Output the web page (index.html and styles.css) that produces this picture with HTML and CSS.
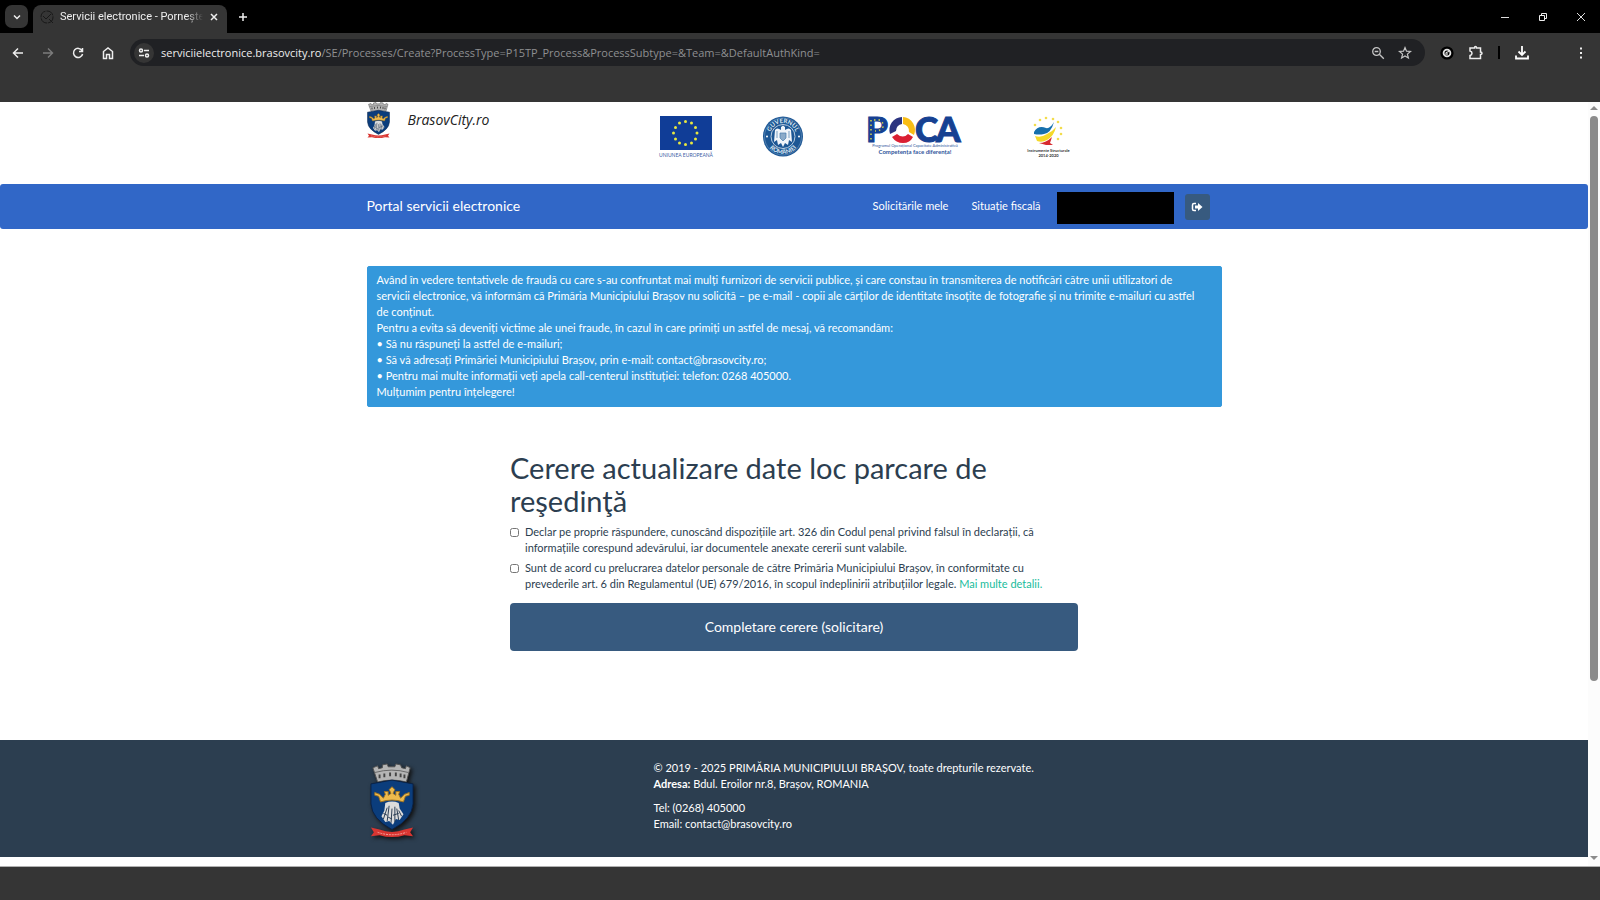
FILE: index.html
```html
<!DOCTYPE html>
<html lang="ro">
<head>
    <meta charset="UTF-8">
    <meta name="viewport" content="width=device-width, initial-scale=1.0">
    <title>Servicii electronice - Pornește demers</title>
    <link rel="stylesheet" href="styles.css">
</head>
<body>
    <!-- Shared coat of arms -->
    <svg class="defs" width="0" height="0" aria-hidden="true">
        <symbol id="crest" viewBox="0 0 46 80" preserveAspectRatio="none">
            <path d="M3 5 L8 3 9 6 13 5 13 2 18 1 19 4 26 4 27 1 32 2 33 5 37 6 38 3 42 5 38 20 Q23 16 8 20 Z" fill="#b5b5b5" stroke="#555" stroke-width="1"/>
            <path d="M5 10 Q23 5 40 10" fill="none" stroke="#666" stroke-width="1"/>
            <path d="M10 12v4M15 11v4M21 10v4M27 10v4M32 11v4M36 12v4" stroke="#444" stroke-width="2"/>
            <path d="M1 22 Q12 20 23 18 Q34 20 45 22 L45 43 Q44 59 23 70 Q2 59 1 43 Z" fill="#0b3d7c" stroke="#0a2347" stroke-width="1"/>
            <path d="M16 42 Q23 39 30 42 L31 48 35 54 31 60 27 59 24 65 20 61 16 62 12 56 15 50 Z" fill="#dcdcdc"/>
            <path d="M18 47 L14 59M20 45 L18 61M23 48 L22 63M26 46 L26 62M28 48 L30 60M30 50 L33 56M14 53l4 2M24 55l6-2M19 57l4 2" stroke="#25384f" stroke-width="1"/>
            <path d="M11 41 L9 35 5 34 5 31 10 33 14 37 16 33 15 30 19 30 19 34 22 32 20 28 23 25 26 28 24 32 27 34 27 30 31 30 30 33 32 37 36 33 41 31 41 34 37 35 35 41 Q23 37 11 41 Z" fill="#eebb4d" stroke="#9b7020" stroke-width="1"/>
            <path d="M1 68 L10 70 Q23 75 36 70 L45 68 42 73 45 77 36 76 Q23 80 10 76 L1 77 4 73 Z" fill="#d93632"/>
            <path d="M8 73 Q23 78 38 73" fill="none" stroke="#f6aaa5" stroke-width="1" stroke-dasharray="2 1"/>
        </symbol>
    </svg>

    <div class="tab-strip">
        <button class="tab-search" aria-label="Search tabs">
            <svg width="10" height="10" viewBox="0 0 10 10"><path d="M2 3.5 5 6.5 8 3.5" class="stroke-light"/></svg>
        </button>
        <div class="tab">
            <svg width="14" height="14" viewBox="0 0 14 14"><circle cx="7" cy="7" r="6" fill="none" stroke="#181818" stroke-dasharray="8 1"/><path d="M3 6 6 9 11 4M9 9l4 4" fill="none" stroke="#181818"/></svg>
            <span class="tab-title">Servicii electronice - Pornește d</span>
            <button class="icon-button" aria-label="Close tab">
                <svg width="10" height="10" viewBox="0 0 10 10"><path d="M2 2 8 8M8 2 2 8" class="stroke-light"/></svg>
            </button>
        </div>
        <button class="icon-button new-tab" aria-label="New tab">
            <svg width="10" height="10" viewBox="0 0 10 10"><path d="M5 1V9M1 5H9" class="stroke-light"/></svg>
        </button>
        <div class="window-controls">
            <button class="icon-button" aria-label="Minimize"><svg width="10" height="10" viewBox="0 0 10 10"><path d="M1 5.5H9" stroke="#ddd"/></svg></button>
            <button class="icon-button" aria-label="Restore"><svg width="10" height="10" viewBox="0 0 10 10"><path d="M1.5 3.5h5v5h-5zM3.5 3V1.5h5v5H7" fill="none" stroke="#eee"/></svg></button>
            <button class="icon-button" aria-label="Close"><svg width="10" height="10" viewBox="0 0 10 10"><path d="M1 1 9 9M9 1 1 9" stroke="#ddd"/></svg></button>
        </div>
    </div>

    <div class="toolbar">
        <div class="toolbar-nav">
            <button class="icon-button" aria-label="Back"><svg width="14" height="14" viewBox="0 0 14 14"><path d="M12 7H2.5M7 2.5 2.5 7 7 11.5" class="stroke-light"/></svg></button>
            <button class="icon-button" aria-label="Forward"><svg width="14" height="14" viewBox="0 0 14 14"><path d="M2 7H11.5M7 2.5 11.5 7 7 11.5" fill="none" stroke="#7c7c7c" stroke-width="1.4"/></svg></button>
            <button class="icon-button" aria-label="Reload"><svg width="14" height="14" viewBox="0 0 14 14"><path d="M11 4.5A4.6 4.6 0 1 0 11.6 8M11.5 2V5.5H8" class="stroke-light"/></svg></button>
            <button class="icon-button" aria-label="Home"><svg width="14" height="14" viewBox="0 0 14 14"><path d="M2.5 12.5V5.5L7 2 11.5 5.5V12.5H8.5V8.5H5.5V12.5Z" class="stroke-light"/></svg></button>
        </div>
        <div class="address-bar">
            <span class="site-info">
                <svg width="12" height="12" viewBox="0 0 12 12"><path d="M6 3.5H11M1 8.5H6" class="stroke-light"/><circle cx="3" cy="3.5" r="1.5" class="stroke-light"/><circle cx="9" cy="8.5" r="1.5" class="stroke-light"/></svg>
            </span>
            <span class="url"><span class="url-host">serviciielectronice.brasovcity.ro</span>/SE/Processes/Create?ProcessType=P15TP_Process&amp;ProcessSubtype=&amp;Team=&amp;DefaultAuthKind=</span>
            <button class="icon-button" aria-label="Zoom"><svg width="14" height="14" viewBox="0 0 14 14"><circle cx="5.5" cy="5.5" r="3.8" fill="none" stroke="#c4c4c4" stroke-width="1.3"/><path d="M8.3 8.3 12.8 12.8M3.7 5.5H7.3" stroke="#c4c4c4" stroke-width="1.3"/></svg></button>
            <button class="icon-button" aria-label="Bookmark"><svg width="14" height="14" viewBox="0 0 14 14"><path d="M7 1.5 8.5 5.2 12.5 5.5 9.4 8.1 10.4 12 7 9.9 3.6 12 4.6 8.1 1.5 5.5 5.5 5.2Z" fill="none" stroke="#c4c4c4" stroke-width="1.2"/></svg></button>
        </div>
        <div class="toolbar-actions">
            <button class="icon-button" aria-label="Extension"><svg width="14" height="14" viewBox="0 0 14 14"><circle cx="7" cy="7" r="6.6" fill="#000"/><circle cx="7" cy="7" r="3.4" fill="none" stroke="#e6e6e6" stroke-width="1.8"/><path d="M6 9V6.5L9 5.5M6.5 8H8" fill="none" stroke="#fff"/></svg></button>
            <button class="icon-button" aria-label="Extensions"><svg width="16" height="16" viewBox="0 0 16 16"><path d="M2 3H6.500Q6.500 1.500 7.500 1.500T8.500 3H12.500V7Q14 7 14 8.200T12.500 9.500V13.500H2V10.500Q4 10 4 8.200T2 6Z" class="stroke-light"/></svg></button>
            <span class="divider"></span>
            <button class="icon-button" aria-label="Downloads"><svg width="16" height="16" viewBox="0 0 16 16"><path d="M8 1V9.5M4.5 6.5 8 10 11.5 6.5M2 10.5V13.5H14V10.5" fill="none" stroke="#fff" stroke-width="1.8"/></svg></button>
            <button class="icon-button menu" aria-label="Menu"><svg width="14" height="14" viewBox="0 0 14 14"><path d="M6 1.500h2v2H6zM6 6h2v2H6zM6 10.500h2v2H6z" fill="#eee"/></svg></button>
        </div>
    </div>
    <div class="bookmarks-bar"></div>

    <div class="viewport">
        <div class="page">
            <header class="container header">
                <a class="city" href="#">
                    <svg width="23" height="37"><use href="#crest" width="23" height="37"/></svg>
                    <span>BrasovCity.ro</span>
                </a>
                <div class="partners">
                    <svg width="52" height="42" viewBox="0 0 52 42" role="img" aria-label="Uniunea Europeană">
                        <rect width="52" height="34" fill="#103d97"/>
                        <g fill="#e9e83f">
                            <circle cx="25.500" cy="5.500" r="1.500"/><circle cx="31.500" cy="7" r="1.500"/><circle cx="35.500" cy="11.500" r="1.500"/><circle cx="37" cy="17" r="1.500"/><circle cx="35.500" cy="23" r="1.500"/><circle cx="31.500" cy="27" r="1.500"/><circle cx="25.500" cy="28.500" r="1.500"/><circle cx="19.500" cy="27" r="1.500"/><circle cx="15.500" cy="23" r="1.500"/><circle cx="13.500" cy="17" r="1.500"/><circle cx="15.500" cy="11.500" r="1.500"/><circle cx="19.500" cy="7" r="1.500"/>
                        </g>
                        <text x="26" y="41" text-anchor="middle" font-size="5" fill="#3f60a5">UNIUNEA EUROPEANĂ</text>
                    </svg>
                    <svg width="40" height="42" viewBox="0 0 40 42" role="img" aria-label="Guvernul României">
                        <path id="arc-top" d="M6.500 20.500A13.500 13.500 0 0 1 33.500 20.500" fill="none"/>
                        <path id="arc-bottom" d="M2.500 20.500A17.500 17.500 0 0 0 37.500 20.500" fill="none"/>
                        <circle cx="20" cy="20.500" r="20" fill="#1d5794"/>
                        <circle cx="20" cy="20.500" r="18.500" fill="none" stroke="#7ea2c8" stroke-width="0.500"/>
                        <circle cx="20" cy="20.500" r="12" fill="none" stroke="#b9cde1" stroke-width="1"/>
                        <g font-size="6" font-weight="bold" fill="#dce7f2" text-anchor="middle">
                            <text><textPath href="#arc-top" startOffset="50%">GUVERNUL</textPath></text>
                            <text><textPath href="#arc-bottom" startOffset="50%">ROMÂNIEI</textPath></text>
                        </g>
                        <path d="M18 11 20 9.500 22 11 22 14Q26 11 28 14L29 26 26 24 25 29 22 27 20 31 18 27 15 29 14 24 11 26 12 14Q14 11 18 14Z" fill="#f0f4f9"/>
                        <path d="M17 17H23V22L20 25 17 22ZM14 15V22M26 15V22" fill="#8cabc9" stroke="#497dad" stroke-width="0.700"/>
                        <circle cx="4" cy="20.500" r="1" fill="#fff"/><circle cx="36" cy="20.500" r="1" fill="#fff"/>
                    </svg>
                    <svg class="poca" width="96" height="40" viewBox="0 0 96 40" role="img" aria-label="POCA">
                        <g font-size="35" font-weight="900" fill="#164192" stroke="#164192"><text x="-2" y="26">P</text><text x="47" y="26">C</text><text x="68" y="26">A</text></g>
                        <path d="M3 4V24M6 4H12Q16 7 15 11Q13 15 7 15" fill="none" stroke="#d5d64b" stroke-width="1.500" stroke-dasharray="1.500 3"/>
                        <path d="M34 1A13 13 0 0 0 22 18L28 15A7 7 0 0 1 34 8Z" fill="#2b3480"/>
                        <path d="M35 1A13 13 0 0 1 46 19L41 16A7 7 0 0 0 35 8Z" fill="#f9bd16"/>
                        <path d="M24 21 29 18Q35 23 40 18L45 21Q42 27 35 27T24 21Z" fill="#da1f32"/>
                        <g text-anchor="middle" fill="#31569c"><text x="47" y="31" font-size="4">Programul Operațional Capacitate Administrativă</text><text x="47" y="38" font-size="6" font-weight="bold">Competența face diferența!</text></g>
                    </svg>
                    <svg width="43" height="42" viewBox="0 0 43 42" role="img" aria-label="Instrumente Structurale">
                        <path d="M7 16Q11 9 19 12 23 13 27 6 24 17 17 18 12 19 7 18Z" fill="#1670ad"/>
                        <path d="M8 20Q14 22 20 18 26 15 29 11 27 20 20 24 15 27 10 25Z" fill="#f4d929"/>
                        <path d="M12 27Q19 27 25 21L23 27 26 29 19 29Z" fill="#d7292e"/>
                        <g fill="#f2dc4d"><circle cx="8" cy="9" r="1.300"/><circle cx="13" cy="4" r="1.300"/><circle cx="19" cy="2" r="1.300"/><circle cx="26" cy="3" r="1.300"/><circle cx="31" cy="6" r="1.300"/><circle cx="34" cy="12" r="1.300"/><circle cx="34" cy="18" r="1.300"/><circle cx="31" cy="23" r="1.300"/></g>
                        <g text-anchor="middle" font-size="4" font-weight="bold" fill="#333"><text x="21.500" y="36">Instrumente Structurale</text><text x="21.500" y="41">2014-2020</text></g>
                    </svg>
                </div>
            </header>

            <nav class="navbar">
                <div class="container navbar-inner">
                    <a class="navbar-brand" href="#">Portal servicii electronice</a>
                    <a class="nav-link" href="#">Solicitările mele</a>
                    <a class="nav-link" href="#">Situație fiscală</a>
                    <span class="user-name"></span>
                    <button class="logout" aria-label="Deconectare">
                        <svg width="12" height="10" viewBox="0 0 12 10"><path d="M5 1.500H3Q1.500 1.500 1.500 3V7Q1.500 8.500 3 8.500H5" fill="none" stroke="#fff" stroke-width="1.500"/><path d="M4 3.500H7V1L11.500 5 7 9V6.500H4Z" fill="#fff"/></svg>
                    </button>
                </div>
            </nav>

            <main class="container">
                <div class="alert">
                    Având în vedere tentativele de fraudă cu care s-au confruntat mai mulți furnizori de servicii publice, și care constau în transmiterea de notificări către unii utilizatori de servicii electronice, vă informăm că Primăria Municipiului Brașov nu solicită – pe e-mail - copii ale cărților de identitate însoțite de fotografie și nu trimite e-mailuri cu astfel de conținut.<br>
                    Pentru a evita să deveniți victime ale unei fraude, în cazul în care primiți un astfel de mesaj, vă recomandăm:<br>
                    • Să nu răspuneți la astfel de e-mailuri;<br>
                    • Să vă adresați Primăriei Municipiului Brașov, prin e-mail: contact@brasovcity.ro;<br>
                    • Pentru mai multe informații veți apela call-centerul instituției: telefon: 0268 405000.<br>
                    Mulțumim pentru înțelegere!
                </div>

                <form class="request-form">
                    <h1>Cerere actualizare date loc parcare de reşedinţă</h1>
                    <div class="checkbox">
                        <input type="checkbox" id="declar">
                        <label for="declar">Declar pe proprie răspundere, cunoscând dispozițiile art. 326 din Codul penal privind falsul în declarații, că informațiile corespund adevărului, iar documentele anexate cererii sunt valabile.</label>
                    </div>
                    <div class="checkbox">
                        <input type="checkbox" id="acord">
                        <label for="acord">Sunt de acord cu prelucrarea datelor personale de către Primăria Municipiului Brașov, în conformitate cu prevederile art. 6 din Regulamentul (UE) 679/2016, în scopul îndeplinirii atribuțiilor legale. <a href="#">Mai multe detalii.</a></label>
                    </div>
                    <button type="button" class="submit">Completare cerere (solicitare)</button>
                </form>
            </main>

            <footer class="footer">
                <div class="container footer-inner">
                    <svg class="footer-crest" width="44" height="76"><use href="#crest" width="44" height="76"/></svg>
                    <div>
                        <p>© 2019 - 2025 PRIMĂRIA MUNICIPIULUI BRAȘOV, toate drepturile rezervate.<br><strong>Adresa:</strong> Bdul. Eroilor nr.8, Brașov, ROMANIA</p>
                        <p>Tel: (0268) 405000<br>Email: contact@brasovcity.ro</p>
                    </div>
                </div>
            </footer>
        </div>
        <div class="scrollbar">
            <svg width="8" height="4" viewBox="0 0 8 4"><path d="M0 4 4 0 8 4Z" fill="#8b8b8b"/></svg>
            <div class="scroll-track"><div class="scroll-thumb"></div></div>
            <svg width="8" height="4" viewBox="0 0 8 4"><path d="M0 0 4 4 8 0Z" fill="#8b8b8b"/></svg>
        </div>
    </div>
    <div class="bottom-bar"></div>
</body>
</html>
```
FILE: styles.css
```css
* {
    box-sizing: border-box;
}
body {
    margin: 0;
    min-height: 100vh;
    display: flex;
    flex-direction: column;
    background-color: #353535;
    font-family: Lato, sans-serif;
    font-size: 11px;
    line-height: 16px;
    color: #2c3e50;
}
button {
    font-family: inherit;
    border: none;
    padding: 0;
    cursor: pointer;
}
svg {
    display: block;
    flex: none;
    overflow: visible;
}
a {
    color: #18bc9c;
    text-decoration: none;
}
.defs {
    position: absolute;
}
.stroke-light {
    fill: none;
    stroke: #eee;
    stroke-width: 1.5;
}
.icon-button {
    display: flex;
    background: none;
}

/* Browser window */
.tab-strip {
    flex: none;
    display: flex;
    align-items: flex-end;
    height: 33px;
    padding-left: 5px;
    background-color: #000;
    font-family: Roboto, sans-serif;
}
.tab-search {
    display: flex;
    align-items: center;
    justify-content: center;
    width: 23px;
    height: 23px;
    margin: 0 5px 5px 0;
    border-radius: 7px;
    background-color: #353535;
}
.tab {
    display: flex;
    align-items: center;
    gap: 6px;
    width: 194px;
    height: 28px;
    padding: 0 8px 4px 7px;
    border-radius: 8px 8px 0 0;
    background-color: #353535;
    color: #eee;
}
.tab-title {
    flex: 1;
    overflow: hidden;
    white-space: nowrap;
    mask-image: linear-gradient(to right, #000 88%, transparent);
}
.new-tab {
    margin: 0 0 11px 11px;
}
.window-controls {
    display: flex;
    gap: 28px;
    margin-left: auto;
    padding: 0 14px 11px 0;
}
.toolbar {
    flex: none;
    display: flex;
    align-items: center;
    height: 39px;
    padding: 0 12px 0 11px;
    background-color: #353535;
}
.toolbar-nav {
    display: flex;
    gap: 16px;
    margin-right: 15px;
}
.address-bar {
    flex: 1;
    display: flex;
    align-items: center;
    gap: 13px;
    height: 27px;
    padding: 0 13px 0 4px;
    border-radius: 14px;
    background-color: #202124;
    font-family: "Open Sans", sans-serif;
    color: #8e8f91;
}
.site-info {
    display: flex;
    align-items: center;
    justify-content: center;
    width: 20px;
    height: 20px;
    margin-right: -6px;
    border-radius: 50%;
    background-color: #353535;
}
.url {
    flex: 1;
    white-space: nowrap;
}
.url-host {
    color: #eee;
}
.toolbar-actions {
    display: flex;
    align-items: center;
    gap: 14px;
    margin-left: 15px;
}
.divider {
    width: 2px;
    height: 13px;
    background-color: #000;
}
.menu {
    margin-left: 30px;
}
.bookmarks-bar {
    height: 30px;
}
.viewport {
    flex: 1;
    display: flex;
    background-color: #fff;
}
.page {
    flex: 1;
    padding-bottom: 9px;
}
.scrollbar {
    width: 12px;
    display: flex;
    flex-direction: column;
    align-items: center;
    gap: 6px;
    padding: 4px 0 6px;
    background-color: #fcfcfc;
}
.scroll-track {
    flex: 1;
}
.scroll-thumb {
    width: 8px;
    height: 77%;
    border-radius: 4px;
    background-color: #8b8b8b;
}
.bottom-bar {
    height: 34px;
    border-top: 1px solid #b0b0b0;
}

/* Page */
.container {
    max-width: 855px;
    margin: 0 auto;
}
.header {
    display: grid;
    grid-template-columns: 293px 1fr;
    height: 82px;
}
.city {
    display: flex;
    align-items: flex-start;
    gap: 18px;
    font-family: "Open Sans", sans-serif;
    font-size: 14px;
    font-style: italic;
    line-height: 36px;
    color: #222;
}
.partners {
    display: flex;
    align-items: flex-start;
    gap: 51px;
    padding-top: 14px;
}
.poca {
    margin: 0 12px 0 14px;
}
.navbar {
    border-radius: 3px;
    background-color: #3167c7;
}
.navbar-inner {
    display: flex;
    align-items: center;
    height: 45px;
    padding-right: 12px;
}
.navbar-brand {
    margin-right: auto;
    padding-bottom: 2px;
    font-size: 14px;
    color: #fff;
}
.nav-link {
    margin-right: 23px;
    padding-bottom: 2px;
    color: #fff;
}
.user-name {
    width: 117px;
    height: 32px;
    margin: 2px 11px 0 -7px;
    background-color: #000;
}
.logout {
    display: flex;
    align-items: center;
    justify-content: center;
    width: 25px;
    height: 26px;
    border-radius: 3px;
    background-color: #375a7f;
}
.alert {
    margin-top: 37px;
    padding: 5px 20px 6px 9px;
    border: 1px solid #3498db;
    border-radius: 2px;
    background-color: #3498db;
    color: #fff;
}
.request-form {
    max-width: 568px;
    margin: 44px auto 89px;
}
h1 {
    margin: 0 0 7px;
    font-size: 29px;
    font-weight: 400;
    line-height: 33px;
}
.checkbox {
    display: flex;
    align-items: flex-start;
    gap: 6px;
    margin-bottom: 4px;
}
.checkbox input {
    flex: none;
    width: 9px;
    height: 9px;
    margin: 4px 0 0;
}
.submit {
    display: block;
    width: 100%;
    height: 48px;
    margin-top: 11px;
    padding-bottom: 2px;
    border-radius: 4px;
    background-color: #375a7f;
    font-size: 14px;
    color: #fff;
}
.footer {
    padding: 20px 0 17px;
    background-color: #2c3e50;
    color: #fff;
}
.footer-inner {
    display: grid;
    grid-template-columns: 287px 1fr;
}
.footer-crest {
    margin: 3px 0 0 3px;
    filter: drop-shadow(2px 2px 2px #111);
}
.footer p {
    margin: 0 0 8px;
}
```
